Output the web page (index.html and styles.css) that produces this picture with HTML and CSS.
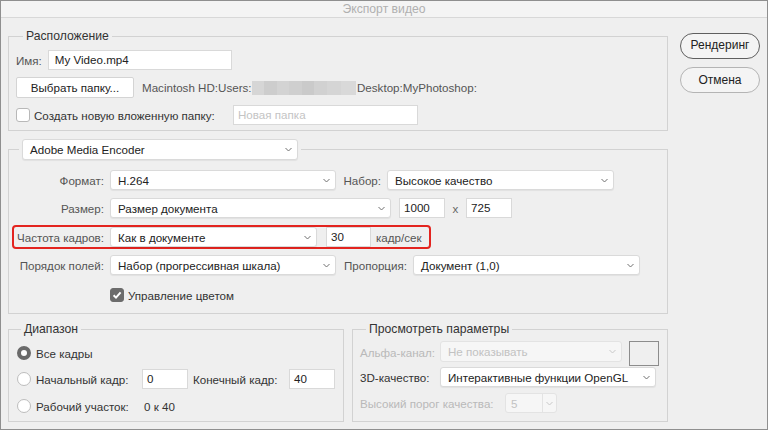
FILE: index.html
```html
<!DOCTYPE html>
<html lang="ru">
<head>
<meta charset="utf-8">
<title>Экспорт видео</title>
<link rel="stylesheet" href="styles.css">
</head>
<body>
<div class="window">
  <div class="titlebar">Экспорт видео</div>
  <div class="main">
    <div class="left">
      <fieldset class="group g1">
        <legend class="legend">Расположение</legend>
        <div class="row r-name">
          <span class="lbl">Имя:</span>
          <div class="input w-name">My Video.mp4</div>
        </div>
        <div class="row r-folder">
          <div class="btn-plain">Выбрать папку...</div>
          <span class="path w-mac">Macintosh HD:Users:</span>
          <span class="blur"></span>
          <span class="path">Desktop:MyPhotoshop:</span>
        </div>
        <div class="row r-sub">
          <span class="check"></span>
          <span class="text w-subl">Создать новую вложенную папку:</span>
          <div class="input placeholder w-sub">Новая папка</div>
        </div>
      </fieldset>

      <fieldset class="group g2">
        <legend class="legend-select">
          <div class="select w-ame"><span>Adobe Media Encoder</span><svg class="chev" width="7" height="5" viewBox="0 0 7 5"><path d="M0.5 1 L3.5 4 L6.5 1"/></svg></div>
        </legend>
        <div class="row r1">
          <span class="lbl l-main">Формат:</span>
          <div class="select w-226"><span>H.264</span><svg class="chev" width="7" height="5" viewBox="0 0 7 5"><path d="M0.5 1 L3.5 4 L6.5 1"/></svg></div>
          <span class="lbl l-nabor">Набор:</span>
          <div class="select w-227"><span>Высокое качество</span><svg class="chev" width="7" height="5" viewBox="0 0 7 5"><path d="M0.5 1 L3.5 4 L6.5 1"/></svg></div>
        </div>
        <div class="row r2">
          <span class="lbl l-main">Размер:</span>
          <div class="select w-281"><span>Размер документа</span><svg class="chev" width="7" height="5" viewBox="0 0 7 5"><path d="M0.5 1 L3.5 4 L6.5 1"/></svg></div>
          <div class="input w-46 ml-8">1000</div>
          <span class="times">x</span>
          <div class="input w-46">725</div>
        </div>
        <div class="row r3 highlight">
          <span class="lbl l-hl">Частота кадров:</span>
          <div class="select w-207"><span>Как в документе</span><svg class="chev" width="7" height="5" viewBox="0 0 7 5"><path d="M0.5 1 L3.5 4 L6.5 1"/></svg></div>
          <div class="input w-45 ml-9">30</div>
          <span class="lbl unit">кадр/сек</span>
        </div>
        <div class="row r4">
          <span class="lbl l-main">Порядок полей:</span>
          <div class="select w-226"><span>Набор (прогрессивная шкала)</span><svg class="chev" width="7" height="5" viewBox="0 0 7 5"><path d="M0.5 1 L3.5 4 L6.5 1"/></svg></div>
          <span class="lbl l-prop">Пропорция:</span>
          <div class="select w-227"><span>Документ (1,0)</span><svg class="chev" width="7" height="5" viewBox="0 0 7 5"><path d="M0.5 1 L3.5 4 L6.5 1"/></svg></div>
        </div>
        <div class="row r5">
          <span class="check checked"><svg width="14" height="14" viewBox="0 0 14 14"><path d="M3.6 7.2 L6 9.6 L10.6 4.4"/></svg></span>
          <span class="text">Управление цветом</span>
        </div>
      </fieldset>

      <div class="bottom">
        <fieldset class="group g3">
          <legend class="legend">Диапазон</legend>
          <div class="row rr1">
            <span class="radio on"></span>
            <span class="text">Все кадры</span>
          </div>
          <div class="row rr2">
            <span class="radio"></span>
            <span class="text w-start">Начальный кадр:</span>
            <div class="input w-46">0</div>
            <span class="text w-end">Конечный кадр:</span>
            <div class="input w-46">40</div>
          </div>
          <div class="row rr3">
            <span class="radio"></span>
            <span class="text w-work">Рабочий участок:</span>
            <span class="text">0 к 40</span>
          </div>
        </fieldset>

        <fieldset class="group g4">
          <legend class="legend">Просмотреть параметры</legend>
          <div class="row pr1">
            <span class="text disabled w-80">Альфа-канал:</span>
            <div class="select dis w-182"><span>Не показывать</span><svg class="chev" width="7" height="5" viewBox="0 0 7 5"><path d="M0.5 1 L3.5 4 L6.5 1"/></svg></div>
            <span class="swatch"></span>
          </div>
          <div class="row pr2">
            <span class="text w-80">3D-качество:</span>
            <div class="select w-216"><span>Интерактивные функции OpenGL</span><svg class="chev" width="7" height="5" viewBox="0 0 7 5"><path d="M0.5 1 L3.5 4 L6.5 1"/></svg></div>
          </div>
          <div class="row pr3">
            <span class="text disabled w-145">Высокий порог качества:</span>
            <div class="select dis split w-52"><span class="val">5</span><span class="arrow"><svg class="chev" width="7" height="5" viewBox="0 0 7 5"><path d="M0.5 1 L3.5 4 L6.5 1"/></svg></span></div>
          </div>
        </fieldset>
      </div>
    </div>

    <div class="right">
      <div class="btn-round default">Рендеринг</div>
      <div class="btn-round">Отмена</div>
    </div>
  </div>
</div>
</body>
</html>
```

FILE: styles.css
```css
* { box-sizing: border-box; }

html, body {
  margin: 0;
  padding: 0;
  background: #ffffff;
}

body {
  font-family: "Liberation Sans", Arial, sans-serif;
  font-size: 11.6px;
  color: #333333;
}

.window {
  width: 768px;
  height: 430px;
  border: 1px solid #8f8f8f;
  background: #efefef;
  display: flex;
  flex-direction: column;
}

.titlebar {
  height: 17px;
  border-bottom: 1px solid #d8d8d8;
  background: #f4f4f4;
  color: #b0b0b0;
  font-size: 12.2px;
  line-height: 17px;
  text-align: center;
}

.main {
  display: flex;
  padding: 0 0 0 7px;
}

.left {
  width: 660px;
  display: flex;
  flex-direction: column;
}

.right {
  width: 80px;
  margin-left: 12px;
  padding-top: 15px;
  display: flex;
  flex-direction: column;
  gap: 8px;
}

/* Groups */
.group {
  margin: 0;
  border: 1px solid #d2d2d2;
  min-width: 0;
}

.legend {
  padding: 0 3px;
  line-height: 16px;
  font-size: 12.2px;
  color: #333333;
}

.legend-select {
  padding: 0 3px;
  margin-left: 7px;
}

.g1 {
  margin-top: 10px;
  padding: 6px 7px 5px 7px;
}
.g1 .legend { margin-left: 7px; }

.g2 {
  margin-top: 8px;
  padding: 10px 3px 8px 3px;
}

.bottom {
  display: flex;
  gap: 8px;
  margin-top: 7px;
}

.g3 {
  width: 336px;
  padding: 6px 8px 5px 8px;
}
.g3 .legend { margin-left: 4px; }

.g4 {
  width: 316px;
  padding: 4px 7px 7px 7px;
}
.g4 .legend { margin-left: 6px; }

/* Rows */
.row {
  display: flex;
  align-items: center;
  height: 20px;
  white-space: nowrap;
}

.r-folder { margin-top: 7px; height: 21px; }
.r-sub { margin-top: 7px; }

.r2 { margin-top: 8px; }
.r3 { margin-top: 7px; }
.r4 { margin-top: 6px; }
.r5 { margin-top: 10px; padding-left: 98px; }

.highlight {
  height: 24px;
  width: 419px;
  border: 2px solid #e3241f;
  border-radius: 4px;
}

.rr2 { margin-top: 6px; }
.rr3 { margin-top: 7px; }

.pr1 { height: 25px; align-items: flex-start; }
.pr1 .text { line-height: 23px; }
.pr2 { margin-top: 1px; }
.pr3 { margin-top: 6px; }

/* Labels */
.lbl { color: #555555; }
.text { color: #333333; }
.disabled { color: #b9b9b9; }

.r-name .lbl { margin-right: 6px; }

.l-main {
  width: 92px;
  margin-right: 6px;
  text-align: right;
}
.l-hl {
  width: 90px;
  margin-right: 6px;
  text-align: right;
}
.l-nabor {
  width: 45px;
  margin-right: 6px;
  text-align: right;
}
.l-prop {
  width: 71px;
  margin-right: 6px;
  text-align: right;
}
.unit { margin-left: 5px; }

.times {
  width: 21px;
  text-align: center;
  color: #666666;
}

.path {
  color: #555555;
}
.w-mac { width: 110px; margin-left: 8px; }

.blur {
  width: 104px;
  height: 14px;
  margin: 1px 1px 0 0;
  background: linear-gradient(90deg,
    #d6d6d6 0 12%, #cdcdcd 12% 24%, #d3d3d3 24% 36%, #cfcfcf 36% 48%,
    #cacaca 48% 60%, #d1d1d1 60% 72%, #d5d5d5 72% 86%, #d9d9d9 86% 100%);
}

/* Inputs */
.input {
  height: 20px;
  background: #ffffff;
  border: 1px solid #d9d9d9;
  padding: 0 4px;
  line-height: 18px;
  color: #222222;
  flex: none;
}
.input.placeholder { color: #c4c4c4; }

.w-name { width: 184px; padding-left: 6px; }
.w-subl { width: 199px; }
.w-sub { width: 185px; }
.w-46 { width: 46px; }
.w-45 { width: 45px; }
.ml-8 { margin-left: 8px; }
.ml-9 { margin-left: 9px; }

/* Selects */
.select {
  height: 20px;
  background: #ffffff;
  border: 1px solid #dadada;
  border-radius: 3px;
  box-shadow: 0 1px 1px rgba(0, 0, 0, 0.06);
  display: flex;
  align-items: center;
  justify-content: space-between;
  padding: 0 5px 0 7px;
  color: #222222;
  flex: none;
}
.select.dis {
  background: #f6f6f6;
  border-color: #e3e3e3;
  box-shadow: none;
  color: #c2c2c2;
}
.chev path {
  fill: none;
  stroke: #707070;
  stroke-width: 1;
}
.dis .chev path { stroke: #c8c8c8; }

.w-ame { width: 276px; height: 21px; }
.w-226 { width: 226px; }
.w-227 { width: 227px; }
.w-281 { width: 281px; }
.w-207 { width: 207px; }
.w-182 { width: 182px; height: 21px; }
.w-216 { width: 216px; }
.w-52 { width: 52px; }

.split {
  padding: 0;
  height: 20px;
}
.split .val {
  padding-left: 5px;
  flex: 1;
}
.split .arrow {
  width: 14px;
  height: 100%;
  border-left: 1px solid #e3e3e3;
  display: flex;
  align-items: center;
  justify-content: center;
}

/* Check & radio */
.check {
  width: 14px;
  height: 14px;
  border: 1px solid #b8b8b8;
  border-radius: 3px;
  background: #ffffff;
  margin-right: 4px;
  flex: none;
}
.check.checked {
  background: #6c6c6c;
  border-color: #6c6c6c;
}
.check.checked svg {
  display: block;
  margin: -1px;
}
.check.checked path {
  fill: none;
  stroke: #ffffff;
  stroke-width: 2;
}

.radio {
  width: 14px;
  height: 14px;
  border-radius: 50%;
  border: 1px solid #bdbdbd;
  background: #ffffff;
  margin-right: 5px;
  flex: none;
}
.radio.on {
  border: 4.5px solid #6a6a6a;
}

.w-start { width: 106px; }
.w-end { width: 96px; margin-left: 5px; }
.w-work { width: 108px; }
.w-80 { width: 80px; }
.w-145 { width: 145px; }

.swatch {
  width: 30px;
  height: 25px;
  border: 1px solid #8c8c8c;
  background: #efefef;
  margin-left: 7px;
}

/* Buttons */
.btn-plain {
  width: 118px;
  height: 21px;
  background: #ffffff;
  border: 1px solid #d4d4d4;
  border-radius: 2px;
  text-align: center;
  line-height: 19px;
  color: #222222;
}

.btn-round {
  height: 26px;
  border: 1px solid #b4b4b4;
  border-radius: 13px;
  background: #f4f4f4;
  text-align: center;
  line-height: 24px;
  font-size: 12px;
  color: #222222;
}
.btn-round.default {
  border: 1.5px solid #5f5f5f;
  line-height: 23px;
}
```
